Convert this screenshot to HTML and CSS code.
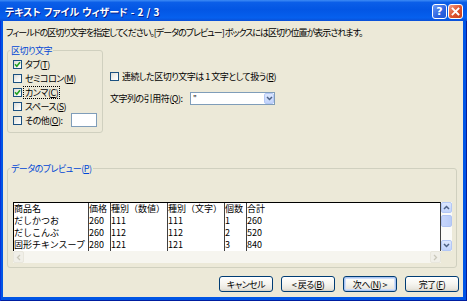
FILE: index.html
```html
<!DOCTYPE html>
<html lang="ja">
<head>
<meta charset="utf-8">
<title>テキスト ファイル ウィザード</title>
<link rel="stylesheet" href="styles.css">
</head>
<body>
<div class="window">
  <div class="titlebar">
    <span class="title">テキスト ファイル ウィザード - 2 / 3</span>
    <div class="title-buttons">
      <span class="tbtn help">?</span>
      <span class="tbtn close"><svg viewBox="0 0 13 13" width="13" height="13"><path d="M3.5 3.5 L9.5 9.5 M9.5 3.5 L3.5 9.5" stroke="#fff" stroke-width="1.8" stroke-linecap="square"/></svg></span>
    </div>
  </div>
  <div class="client">
    <p class="instruction">フィールドの区切り文字を指定してください。[データのプレビュー] ボックスには区切り位置が表示されます。</p>
    <div class="options">
      <fieldset class="group delims">
        <legend>区切り文字</legend>
        <div class="check-row"><span class="cb checked"><svg viewBox="0 0 7 7" width="7" height="7"><path d="M1 3.2 L2.8 5.2 L6 1.2" fill="none" stroke="#21A121" stroke-width="1.6"/></svg></span><span class="lbl">タブ(<u>T</u>)</span></div>
        <div class="check-row"><span class="cb"></span><span class="lbl">セミコロン(<u>M</u>)</span></div>
        <div class="check-row"><span class="cb checked"><svg viewBox="0 0 7 7" width="7" height="7"><path d="M1 3.2 L2.8 5.2 L6 1.2" fill="none" stroke="#21A121" stroke-width="1.6"/></svg></span><span class="lbl focus">カンマ(<u>C</u>)</span></div>
        <div class="check-row"><span class="cb"></span><span class="lbl">スペース(<u>S</u>)</span></div>
        <div class="check-row"><span class="cb"></span><span class="lbl">その他(<u>O</u>):</span><span class="textbox"></span></div>
      </fieldset>
      <div class="side">
        <div class="check-row"><span class="cb"></span><span class="lbl">連続した区切り文字は 1 文字として扱う(<u>R</u>)</span></div>
        <div class="quote-row">
          <span class="lbl">文字列の引用符(<u>Q</u>):</span>
          <span class="select"><span class="val">"</span><span class="drop"><svg viewBox="0 0 7 5" width="7" height="5"><path d="M1 1 L3.5 3.5 L6 1" fill="none" stroke="#4D6185" stroke-width="1.5"/></svg></span></span>
        </div>
      </div>
    </div>
    <fieldset class="group preview">
      <legend>データのプレビュー(<u>P</u>)</legend>
      <div class="listbox">
        <div class="list-main">
          <div class="data">
            <span>商品名</span><span>価格</span><span>種別（数値）</span><span>種別（文字）</span><span>個数</span><span>合計</span>
            <span>だしかつお</span><span>260</span><span>111</span><span>111</span><span>1</span><span>260</span>
            <span>だしこんぶ</span><span>260</span><span>112</span><span>112</span><span>2</span><span>520</span>
            <span>固形チキンスープ</span><span>280</span><span>121</span><span>121</span><span>3</span><span>840</span>
          </div>
          <div class="vscroll">
            <span class="sbtn"><svg viewBox="0 0 7 5" width="7" height="5"><path d="M1 4 L3.5 1.5 L6 4" fill="none" stroke="#4D6185" stroke-width="1.5"/></svg></span>
            <span class="thumb"></span>
            <span class="sbtn down"><svg viewBox="0 0 7 5" width="7" height="5"><path d="M1 1 L3.5 3.5 L6 1" fill="none" stroke="#4D6185" stroke-width="1.5"/></svg></span>
          </div>
        </div>
        <div class="hscroll-row">
          <div class="hscroll">
            <span class="sbtn off"><svg viewBox="0 0 5 7" width="5" height="7"><path d="M4 1 L1.5 3.5 L4 6" fill="none" stroke="#C9C7BA" stroke-width="1.3"/></svg></span>
            <span class="sbtn off right"><svg viewBox="0 0 5 7" width="5" height="7"><path d="M1 1 L3.5 3.5 L1 6" fill="none" stroke="#C9C7BA" stroke-width="1.3"/></svg></span>
          </div>
          <div class="corner"></div>
        </div>
      </div>
    </fieldset>
    <div class="buttons">
      <span class="btn">キャンセル</span>
      <span class="btn">&lt; 戻る(<u>B</u>)</span>
      <span class="btn default">次へ(<u>N</u>) &gt;</span>
      <span class="btn">完了(<u>F</u>)</span>
    </div>
  </div>
</div>
</body>
</html>
```

FILE: styles.css
```css
* { box-sizing: border-box; }
html, body { margin: 0; padding: 0; }
body {
  width: 467px;
  height: 301px;
  overflow: hidden;
  background: #fff;
  font-family: "Noto Sans CJK JP", "Noto Sans", sans-serif;
  font-size: 9px;
  font-feature-settings: "palt";
  letter-spacing: -0.5px;
  color: #000;
}
u { text-decoration: underline; text-underline-offset: 1px; }

.window {
  width: 467px;
  height: 301px;
  display: flex;
  flex-direction: column;
  background: #0055E5;
  box-shadow: inset 1px 0 0 #0831D9, inset -1px 0 0 #001EA0, inset 0 -1px 0 #001EA0;
}

.titlebar {
  height: 21px;
  flex: none;
  display: flex;
  align-items: center;
  padding: 2px 4px 0 5px;
  background: linear-gradient(#3D8BF5 0%, #0B5EE8 12%, #0356E4 45%, #0660EE 85%, #0A4FD6 100%);
}
.title {
  flex: 1;
  color: #fff;
  font-weight: bold;
  font-size: 10px;
  letter-spacing: -0.1px;
  word-spacing: 1px;
  line-height: 12px;
  white-space: nowrap;
  text-shadow: 1px 1px 0 #0A1E8A;
}
.title-buttons { display: flex; gap: 1px; }
.tbtn {
  width: 15px;
  height: 15px;
  border: 1px solid #fff;
  border-radius: 3px;
  display: flex;
  align-items: center;
  justify-content: center;
  color: #fff;
  font-family: "DejaVu Sans", sans-serif;
  font-weight: bold;
  font-size: 11px;
  letter-spacing: 0;
  line-height: 1;
}
.tbtn.help { background: linear-gradient(135deg, #6E9BF6, #2A62E0 60%, #1E54D4); }
.tbtn.close { background: linear-gradient(135deg, #F2A08A, #E0542E 50%, #C7401C); }

.client {
  flex: 1;
  margin: 0 4px 4px 3px;
  padding: 6px 4px 0 4px;
  background: #ECE9D8;
  display: flex;
  flex-direction: column;
}
.instruction {
  margin: 0 0 0 -1px;
  line-height: 11px;
  letter-spacing: -1px;
  white-space: nowrap;
}

.options {
  display: flex;
  margin-top: 7px;
}
.group {
  margin: 0;
  border: 1px solid #D0D0BF;
  border-radius: 3px;
  padding: 0 2px;
  min-width: 0;
}
.group legend {
  padding: 0 1px;
  color: #0046D5;
  line-height: 11px;
}
.delims {
  flex: none;
  width: 96px;
  padding-top: 1px;
  padding-bottom: 5px;
}
.check-row {
  height: 14px;
  display: flex;
  align-items: center;
  gap: 3px;
  padding-left: 3px;
  white-space: nowrap;
  line-height: 11px;
}
.cb {
  width: 9px;
  height: 9px;
  flex: none;
  border: 1px solid #1C5180;
  background: linear-gradient(135deg, #DCDCD7, #F5F5F2 60%, #fff);
  display: flex;
  align-items: center;
  justify-content: center;
}
.lbl.focus { outline: 1px dotted #000; outline-offset: 0; padding: 0 1px; margin-left: -1px; }
.textbox {
  margin-left: auto;
  margin-right: 3px;
  width: 26px;
  height: 14px;
  border: 1px solid #7F9DB9;
  background: #fff;
}

.side {
  margin-left: 7px;
  padding-top: 24px;
  display: flex;
  flex-direction: column;
  gap: 8px;
}
.side .check-row { padding-left: 0; gap: 3px; }
.quote-row {
  height: 14px;
  display: grid;
  grid-template-columns: 80px 85px;
  align-items: center;
  white-space: nowrap;
}
.select {
  height: 13px;
  border: 1px solid #7F9DB9;
  background: #fff;
  display: flex;
  align-items: stretch;
}
.select .val { flex: 1; padding-left: 2px; line-height: 11px; font-size: 8px; }
.drop, .sbtn {
  display: flex;
  align-items: center;
  justify-content: center;
  background: linear-gradient(#DCE7FE, #C1D3FB);
  border: 1px solid #B4C8F6;
  border-radius: 2px;
}
.drop { width: 10px; margin: 0; }

.preview {
  margin-top: 30px;
  margin-right: 2px;
  padding-top: 28px;
  padding-bottom: 4px;
}
.listbox {
  margin-left: 3px;
  margin-right: 2px;
  height: 61px;
  display: flex;
  flex-direction: column;
}
.list-main {
  height: 49px;
  display: flex;
}
.data {
  flex: 1;
  background: #fff;
  border-top: 1px solid #000;
  border-left: 1px solid #000;
  border-right: 1px solid #404040;
  display: grid;
  grid-template-columns: 74px 22px 57px 57px 22px 1fr;
  grid-auto-rows: 12px;
  line-height: 12px;
  font-feature-settings: normal;
  letter-spacing: 0;
  overflow: hidden;
}
.data span {
  white-space: nowrap;
  overflow: hidden;
}
.data span:not(:nth-child(6n+1)) { border-left: 1px solid #404040; }
.vscroll {
  width: 11px;
  display: flex;
  flex-direction: column;
  background: #FBFBF9;
}
.vscroll .sbtn { height: 11px; }
.vscroll .thumb {
  margin-top: 2px;
  height: 12px;
  background: linear-gradient(90deg, #C7D6FC, #B9CCF8);
  border: 1px solid #B0C4F4;
  border-radius: 2px;
}
.vscroll .down { margin-top: auto; }
.hscroll-row { height: 12px; display: flex; }
.hscroll {
  flex: 1;
  display: flex;
  justify-content: space-between;
  background: #F6F5EF;
}
.hscroll .sbtn { width: 11px; }
.sbtn.off {
  background: #F0EFE8;
  border-color: #E8E6DC;
}
.corner { width: 11px; background: #ECE9D8; }

.buttons {
  margin-top: 8px;
  display: flex;
  justify-content: flex-end;
  gap: 8px;
}
.btn {
  width: 54px;
  height: 16px;
  border: 1px solid #003C74;
  border-radius: 3px;
  background: linear-gradient(#FFFFFF, #F5F4EF 50%, #E8E6DE 85%, #D6D0C5);
  display: flex;
  align-items: center;
  justify-content: center;
  line-height: 11px;
  white-space: nowrap;
}
.btn.default { box-shadow: inset 0 0 0 1px #A9C4F2, inset 0 0 0 2px #CEDDF8; }
```
